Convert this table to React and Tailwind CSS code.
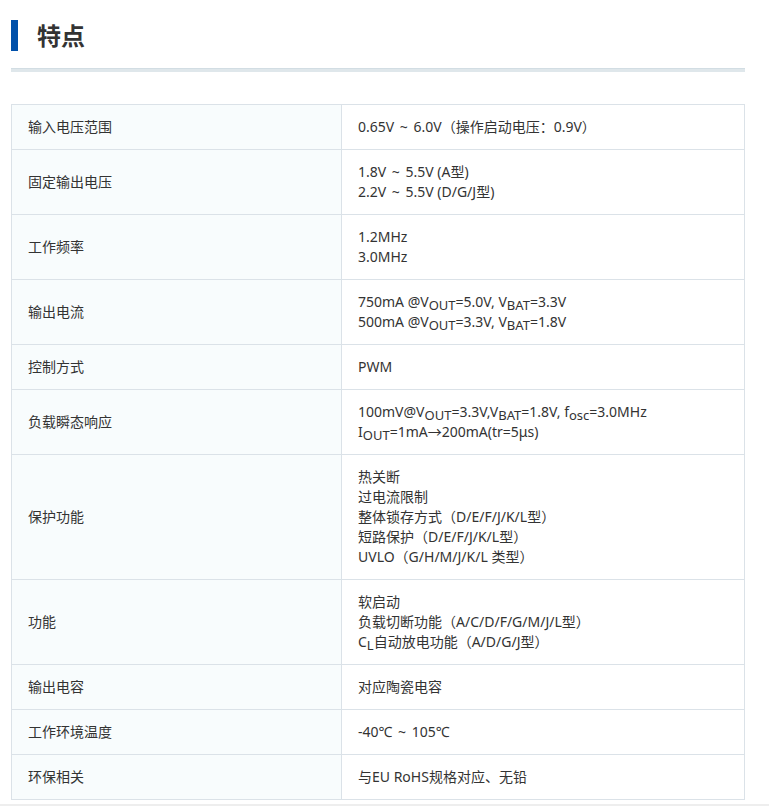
import React from "react";

const S = ({ children }) => (
  <span className="inline-block translate-y-[3px] text-[13px] leading-[14px]">{children}</span>
);

const rows = [
  ["输入电压范围", [<>0.65V <span className="px-[2px]">~</span> 6.0V（操作启动电压：0.9V）</>]],
  ["固定输出电压", [<>1.8V <span className="px-[2px]">~</span> 5.5V (A型)</>, <>2.2V <span className="px-[2px]">~</span> 5.5V (D/G/J型)</>]],
  ["工作频率", [<>1.2MHz</>, <>3.0MHz</>]],
  [
    "输出电流",
    [
      <>750mA @V<S>OUT</S>=5.0V, V<S>BAT</S>=3.3V</>,
      <>500mA @V<S>OUT</S>=3.3V, V<S>BAT</S>=1.8V</>,
    ],
  ],
  ["控制方式", [<>PWM</>]],
  [
    "负载瞬态响应",
    [
      <>100mV@V<S>OUT</S>=3.3V,V<S>BAT</S>=1.8V, f<S>osc</S>=3.0MHz</>,
      <>I<S>OUT</S>=1mA→200mA(tr=5μs)</>,
    ],
  ],
  [
    "保护功能",
    [
      <>热关断</>,
      <>过电流限制</>,
      <>整体锁存方式（D/E/F/J/K/L型）</>,
      <>短路保护（D/E/F/J/K/L型）</>,
      <>UVLO（G/H/M/J/K/L 类型）</>,
    ],
  ],
  [
    "功能",
    [
      <>软启动</>,
      <>负载切断功能（A/C/D/F/G/M/J/L型）</>,
      <>C<S>L</S>自动放电功能（A/D/G/J型）</>,
    ],
  ],
  ["输出电容", [<>对应陶瓷电容</>]],
  ["工作环境温度", [<>-40℃ <span className="px-[2px]">~</span> 105℃</>]],
  ["环保相关", [<>与EU RoHS规格对应、无铅</>]],
];

export default function App() {
  return (
    <div
      className="bg-white text-[#333] w-[769px] min-h-[809px]"
      style={{ fontFamily: '"Noto Sans", "Noto Sans CJK SC", sans-serif' }}
    >
      <div className="pl-[11px] w-[745px] pt-[20px]">
        <div className="flex items-center h-[31px]">
          <div className="w-[7px] h-[31px] bg-[#0050aa]" />
          <h2 className="ml-[19px] text-[24px] font-bold leading-[31px] text-[#333]">特点</h2>
        </div>
        <div className="mt-[17px] h-[4px] bg-[#dfe7eb] border-t border-[#d2dde3]" />
        <table className="mt-[32px] w-full border-collapse text-[14px] leading-[20px]">
          <tbody>
            {rows.map(([label, lines], i) => (
              <tr key={i}>
                <td className="w-[330px] border border-[#dbe2e8] bg-[#f8fcfd] px-[16px] py-[12px] align-middle">
                  {label}
                </td>
                <td className="border border-[#dbe2e8] bg-white px-[16px] py-[12px] align-middle">
                  {lines.map((l, j) => (
                    <div key={j} className="h-[20px] whitespace-nowrap">
                      {l}
                    </div>
                  ))}
                </td>
              </tr>
            ))}
          </tbody>
        </table>
      </div>
      <div className="mt-[4px] h-[2px] bg-[#eeeeee]" />
    </div>
  );
}
